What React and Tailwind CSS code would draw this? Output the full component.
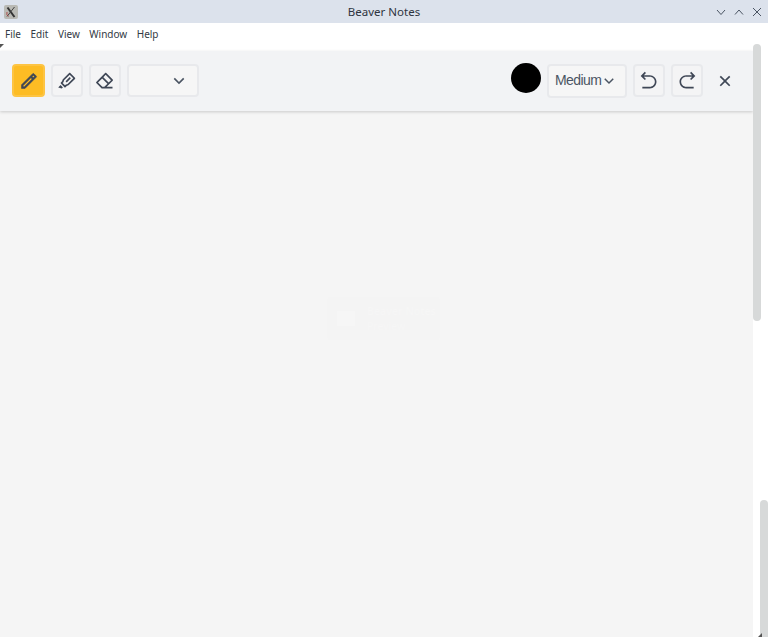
import {
  RiPencilLine,
  RiMarkPenLine,
  RiEraserLine,
  RiArrowDownSLine,
  RiArrowGoBackLine,
  RiArrowGoForwardLine,
  RiCloseLine,
} from "react-icons/ri";

const menuItems = ["File", "Edit", "View", "Window", "Help"];

const WindowIcon = () => (
  <div className="w-[14px] h-[14px] bg-[#b9b9b4] rounded-[2px] flex items-center justify-center">
    <svg width="12" height="12" viewBox="0 0 12 12" fill="none">
      <path d="M2.5 1.5 L9.5 11" stroke="#333" strokeWidth="2" />
      <path d="M9.5 1 L2 10.5" stroke="#444" strokeWidth="1" />
      <path d="M2 6 Q1 9 3.5 10.5" stroke="#a33" strokeWidth="0.8" />
    </svg>
  </div>
);

const ToolButton = ({ icon: Icon, active }) => (
  <button
    className={`h-[33px] flex items-center justify-center rounded-[4px] border-2 ${
      active
        ? "w-[33px] bg-[#fdbc24] border-[#fdc443]"
        : "w-[32px] bg-[#f4f4f5] border-[#e8e9ec]"
    }`}
  >
    <Icon
      className="text-[20px] text-[#3f4756]"
      stroke="currentColor"
      strokeWidth={active ? "0.7" : "0"}
    />
  </button>
);

const App = () => {
  return (
    <div className="relative w-[768px] h-[637px] overflow-hidden flex flex-col bg-white font-['Noto_Sans',sans-serif]">
      {/* title bar */}
      <div className="h-[23px] bg-[#dce2ec] flex items-center pl-1 pr-[4px]">
        <div className="w-[60px]">
          <WindowIcon />
        </div>
        <span className="flex-1 text-center text-[11.5px] leading-[24px] text-[#2e3440]">
          Beaver Notes
        </span>
        <div className="w-[60px] flex items-center justify-end gap-[4px] text-[#4b5563]">
          <svg width="14" height="14" viewBox="0 0 14 14" fill="none" stroke="currentColor" strokeWidth="1">
            <path d="M3 5 L7 9.5 L11 5" />
          </svg>
          <svg width="14" height="14" viewBox="0 0 14 14" fill="none" stroke="currentColor" strokeWidth="1">
            <path d="M3 9.5 L7 5 L11 9.5" />
          </svg>
          <svg width="14" height="14" viewBox="0 0 14 14" fill="none" stroke="currentColor" strokeWidth="1">
            <path d="M3 3 L11 11 M11 3 L3 11" />
          </svg>
        </div>
      </div>

      {/* menu bar */}
      <div className="h-[28px] flex items-center gap-[9.5px] pl-[5px] pb-[5px] text-[10px] text-[#333a45]">
        {menuItems.map((item) => (
          <span key={item}>{item}</span>
        ))}
      </div>

      {/* note area */}
      <div className="flex-1 flex min-h-0">
        <div className="w-[753px] flex flex-col bg-[#f5f5f5]">
          <div className="h-[60px] bg-[#f2f3f5] shadow-[0_1px_3px_rgba(0,0,0,0.18)] flex items-center justify-between pl-3 pr-[17px]">
            <div className="flex items-center gap-[6px] -mt-[1px]">
              <ToolButton icon={RiPencilLine} active />
              <ToolButton icon={RiMarkPenLine} />
              <ToolButton icon={RiEraserLine} />
              <button className="w-[72px] h-[33px] flex items-center justify-end pr-[8px] rounded-[4px] border-2 border-[#e8e9ec] bg-[#f6f6f6]">
                <RiArrowDownSLine className="text-[20px] text-[#4b5563]" />
              </button>
            </div>
            <div className="flex items-center gap-[6px] -mt-[1px]">
              <div className="w-[30px] h-[30px] rounded-full bg-black -mt-[5px]" />
              <button className="w-[80px] h-[34px] flex items-center pl-[6px] rounded-[4px] border-2 border-[#e8e9ec] bg-[#f6f6f6] text-[14px] tracking-[-0.6px] text-[#4b5563] font-['Liberation_Sans',sans-serif]">
                Medium
                <RiArrowDownSLine className="text-[18px] text-[#4b5563] -ml-[1px]" />
              </button>
              <ToolButton icon={RiArrowGoBackLine} />
              <ToolButton icon={RiArrowGoForwardLine} />
              <button className="w-[22px] h-[33px] ml-[5px] flex items-center justify-center">
                <RiCloseLine className="text-[20px] text-[#3f4756]" />
              </button>
            </div>
          </div>
          <div className="flex-1" />
        </div>
      </div>

      {/* faint watermark card */}
      <div className="absolute left-[327px] top-[297px] w-[113px] h-[43px] bg-[#f4f4f4] rounded-[3px] flex items-center gap-[12px] pl-[10px]">
        <div className="w-[18px] h-[15px] bg-[#f6f6f6]" />
        <div className="flex flex-col text-[10.5px] leading-[15px] text-[#f6f6f6]">
          <span className="font-semibold">Beaver Notes</span>
          <span>Preview</span>
        </div>
      </div>

      {/* scrollbars */}
      <div className="absolute left-[753px] top-[44px] w-[8px] h-[277px] bg-[#d7d9d9] rounded-[4px]" />
      <div className="absolute left-[760px] top-[500px] w-[8px] h-[137px] bg-[#d7d9d9] rounded-t-[4px]" />

      {/* window corner marks */}
      <svg className="absolute left-0 top-[44px]" width="4" height="4" viewBox="0 0 4 4">
        <path d="M0 0 H4 L0 4 Z" fill="#555" />
      </svg>
      <svg className="absolute left-[758px] top-[633px]" width="4" height="4" viewBox="0 0 4 4">
        <path d="M4 0 V4 H0 Z" fill="#555" />
      </svg>
    </div>
  );
};

export default App;
